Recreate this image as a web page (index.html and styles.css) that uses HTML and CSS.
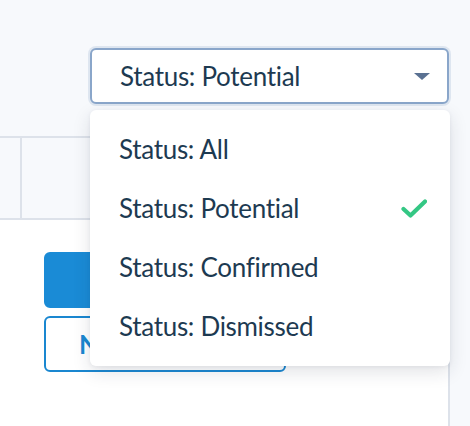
FILE: index.html
```html
<!DOCTYPE html>
<html lang="en">
<head>
<meta charset="utf-8">
<title>Status filter</title>
<link rel="stylesheet" href="styles.css">
</head>
<body>
<div class="page">
  <header class="toolbar">
    <div class="select">
      <button class="select-trigger" type="button">
        <span class="select-value">Status: Potential</span>
        <span class="caret"></span>
      </button>
      <ul class="select-menu">
        <li class="option">Status: All</li>
        <li class="option is-selected">Status: Potential
          <svg class="check" width="26" height="20" viewBox="0 0 26 20"><polyline points="2.5,10 9.5,16.5 24,2.5" fill="none" stroke="#34c784" stroke-width="4.2" stroke-linecap="round" stroke-linejoin="round"/></svg>
        </li>
        <li class="option">Status: Confirmed</li>
        <li class="option">Status: Dismissed</li>
      </ul>
    </div>
  </header>
  <div class="content">
    <div class="table-row">
      <div class="cell cell-narrow"></div>
      <div class="cell"></div>
    </div>
    <div class="panel">
      <div class="actions">
        <button class="btn btn-primary" type="button" aria-label="Add">
          <svg class="btn-icon" width="20" height="20" viewBox="0 0 20 20"><path d="M10 3v14M3 10h14" stroke="#ffffff" stroke-width="3" stroke-linecap="round"/></svg>
        </button>
        <button class="btn btn-outline" type="button">No</button>
      </div>
    </div>
  </div>
</div>
</body>
</html>
```

FILE: styles.css
```css
* { box-sizing: border-box; }

html, body {
  margin: 0;
  padding: 0;
}

body {
  width: 470px;
  height: 426px;
  overflow: hidden;
  background: #f7f9fc;
  font-family: Lato, "Open Sans", sans-serif;
  color: #1d3a51;
}

.page {
  display: flex;
  flex-direction: column;
  height: 426px;
}

.toolbar {
  height: 136px;
  padding-top: 48px;
  padding-left: 90px;
  position: relative;
  z-index: 2;
}

.select {
  position: relative;
  width: 359px;
}

.select-trigger {
  display: flex;
  align-items: center;
  justify-content: space-between;
  width: 100%;
  height: 56px;
  padding: 0 17px 0 28px;
  background: #ffffff;
  border: 2px solid #8aa6ca;
  border-radius: 6px;
  box-shadow: 0 0 0 2px rgba(138, 166, 202, 0.22);
  font-family: inherit;
  font-size: 26px;
  letter-spacing: -0.3px;
  line-height: 52px;
  color: #1d3a51;
  text-align: left;
}

.caret {
  width: 0;
  height: 0;
  border-left: 8px solid transparent;
  border-right: 8px solid transparent;
  border-top: 7px solid #5a7192;
}

.select-menu {
  position: absolute;
  top: 62px;
  left: 0;
  width: 360px;
  margin: 0;
  padding: 10px 0;
  list-style: none;
  background: #ffffff;
  border-radius: 6px;
  box-shadow: 0 6px 18px rgba(30, 40, 60, 0.13), 0 1px 4px rgba(30, 40, 60, 0.06);
}

.option {
  display: flex;
  align-items: center;
  justify-content: space-between;
  height: 59px;
  padding: 0 23px 0 29px;
  font-size: 26px;
  letter-spacing: -0.3px;
  line-height: 59px;
  color: #1d3a51;
}

.check {
  display: block;
}

.content {
  flex: 1;
  display: flex;
  flex-direction: column;
  width: 450px;
}

.table-row {
  display: flex;
  height: 84px;
  border-top: 2px solid #dde2ea;
  border-bottom: 2px solid #dde2ea;
}

.cell {
  flex: 1;
}

.cell-narrow {
  flex: 0 0 22px;
  border-right: 2px solid #dde2ea;
}

.panel {
  flex: 1;
  background: #ffffff;
  border-right: 2px solid #dde2ea;
  padding: 32px 0 0 44px;
}

.actions {
  display: flex;
  flex-direction: column;
  gap: 8px;
  width: 242px;
}

.btn {
  display: flex;
  align-items: center;
  height: 56px;
  border-radius: 6px;
  font-family: inherit;
  font-size: 26px;
  font-weight: 700;
}

.btn-primary {
  justify-content: center;
  background: #1a8bd6;
  border: 2px solid #1a8bd6;
}

.btn-outline {
  background: #ffffff;
  border: 2px solid #1a87d0;
  color: #1a87d0;
  padding-left: 33px;
}
```
